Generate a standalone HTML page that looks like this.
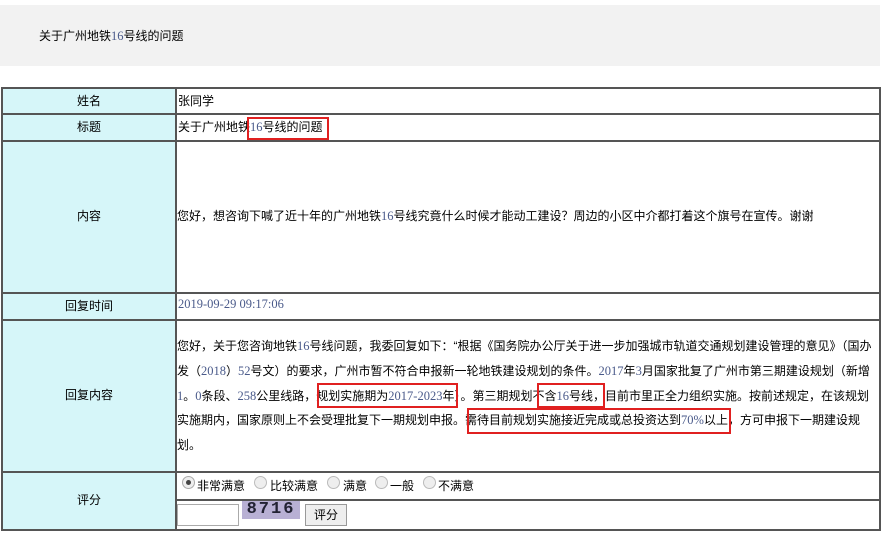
<!DOCTYPE html>
<html><head><meta charset="utf-8"><style>
body{margin:0;width:886px;height:537px;background:#fff;position:relative;overflow:hidden;font-family:"Liberation Sans","Noto Sans CJK SC","WenQuanYi Zen Hei",sans-serif;font-size:12px;color:#000}
.a{position:absolute;white-space:nowrap}
.n{font-family:"Liberation Serif",serif;color:#4a5a8a;font-size:12.5px}
.hl{position:absolute;border:2px solid #e02020}
.l{position:absolute;background:#d6f6f9}
.h{position:absolute;height:2px;background:#555;left:2px;width:879px}
.v{position:absolute;width:2px;background:#555}
.lab{position:absolute;left:2px;width:174px;text-align:center}
</style></head><body>
<div class="a" style="left:0;top:5px;width:880px;height:61px;background:#f2f2f2"></div>
<div class="a" style="left:39px;top:27px">关于广州地铁<span class="n">16</span>号线的问题</div>

<div class="l" style="left:3px;top:88px;width:173px;height:442px"></div>
<div class="h" style="top:87px"></div>
<div class="h" style="top:113px"></div>
<div class="h" style="top:140px"></div>
<div class="h" style="top:292px"></div>
<div class="h" style="top:319px"></div>
<div class="h" style="top:471px"></div>
<div class="h" style="top:499px"></div>
<div class="h" style="top:529px"></div>
<div class="v" style="left:1px;top:87px;height:444px"></div>
<div class="v" style="left:175px;top:87px;height:444px"></div>
<div class="v" style="left:879px;top:87px;height:444px"></div>

<div class="lab" style="top:92px">姓名</div>
<div class="lab" style="top:118px">标题</div>
<div class="lab" style="top:207px">内容</div>
<div class="lab" style="top:297px">回复时间</div>
<div class="lab" style="top:386px">回复内容</div>
<div class="lab" style="top:491px;background:#d6f6f9;left:3px;width:172px">评分</div>

<div class="a" style="left:178px;top:92px">张同学</div>
<div class="a" style="left:178px;top:118px">关于广州地铁<span class="n">16</span>号线的问题</div>
<div class="hl" style="left:247px;top:117px;width:78px;height:19px"></div>
<div class="a" style="left:177px;top:207px">您好，想咨询下喊了近十年的广州地铁<span class="n">16</span>号线究竟什么时候才能动工建设？周边的小区中介都打着这个旗号在宣传。谢谢</div>
<div class="a n" style="left:178px;top:297px">2019-09-29 09:17:06</div>

<div class="a" style="left:177px;top:337px">您好，关于您咨询地铁<span class="n">16</span>号线问题，我委回复如下：“根据《国务院办公厅关于进一步加强城市轨道交通规划建设管理的意见》（国办</div>
<div class="a" style="left:177px;top:362px">发（<span class="n">2018</span>）<span class="n">52</span>号文）的要求，广州市暂不符合申报新一轮地铁建设规划的条件。<span class="n">2017</span>年<span class="n">3</span>月国家批复了广州市第三期建设规划（新增</div>
<div class="a" style="left:177px;top:387px"><span class="n">1</span>。<span class="n">0</span>条段、<span class="n">258</span>公里线路，规划实施期为<span class="n">2017-2023</span>年）。第三期规划不含<span class="n">16</span>号线，目前市里正全力组织实施。按前述规定，在该规划</div>
<div class="a" style="left:177px;top:411px">实施期内，国家原则上不会受理批复下一期规划申报。需待目前规划实施接近完成或总投资达到<span class="n">70%</span>以上，方可申报下一期建设规</div>
<div class="a" style="left:177px;top:436px">划。</div>
<div class="hl" style="left:317px;top:383px;width:137px;height:21px"></div>
<div class="hl" style="left:537px;top:383px;width:64px;height:21px"></div>
<div class="hl" style="left:467px;top:408px;width:260px;height:22px"></div>

<div class="a" style="left:182px;top:476px;width:11px;height:11px;border:1px solid #aaa;border-radius:50%;background:#eee"><div style="margin:3px;width:5px;height:5px;border-radius:50%;background:#444"></div></div>
<div class="a" style="left:197px;top:477px">非常满意</div>
<div class="a" style="left:254px;top:476px;width:11px;height:11px;border:1px solid #bbb;border-radius:50%;background:#eee"></div>
<div class="a" style="left:270px;top:477px">比较满意</div>
<div class="a" style="left:327px;top:476px;width:11px;height:11px;border:1px solid #bbb;border-radius:50%;background:#eee"></div>
<div class="a" style="left:343px;top:477px">满意</div>
<div class="a" style="left:375px;top:476px;width:11px;height:11px;border:1px solid #bbb;border-radius:50%;background:#eee"></div>
<div class="a" style="left:390px;top:477px">一般</div>
<div class="a" style="left:423px;top:476px;width:11px;height:11px;border:1px solid #bbb;border-radius:50%;background:#eee"></div>
<div class="a" style="left:438px;top:477px">不满意</div>

<div class="a" style="left:177px;top:504px;width:60px;height:20px;border:1px solid #aaa;background:#fff"></div>
<div class="a" style="left:242px;top:501px;width:58px;height:18px;background:#b8b0d4;font:bold 17px 'Liberation Mono',monospace;color:#223;letter-spacing:2px;text-align:center;line-height:18px">8716</div>
<div class="a" style="left:305px;top:504px;width:40px;height:20px;border:1px solid #999;background:#eee;text-align:center;line-height:20px">评分</div>
</body></html>
